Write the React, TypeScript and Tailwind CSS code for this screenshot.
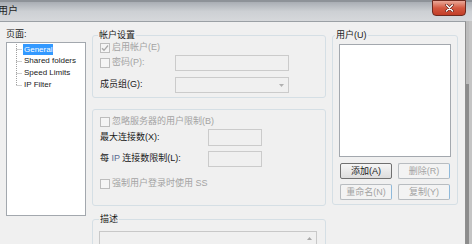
import React from "react";

const F = "font-['Liberation_Sans','Noto_Sans_CJK_SC',sans-serif]";

function Check({ checked }: { checked?: boolean }) {
  return (
    <span className="w-[10px] h-[10px] border border-[#bdbdbd] bg-[#f5f5f5] flex items-center justify-center shrink-0">
      {checked && (
        <svg width="8" height="8" viewBox="0 0 8 8">
          <path d="M1 4.2 L3 6.3 L7 1.5" stroke="#a9a9a9" strokeWidth="1.3" fill="none" />
        </svg>
      )}
    </span>
  );
}

function Box({ w, h }: { w: string; h: string }) {
  return <div className={`${w} ${h} border border-[#cbcbcb] bg-[#f0f0f0]`} />;
}

function Btn({ label, enabled }: { label: string; enabled?: boolean }) {
  return enabled ? (
    <div className="w-[52px] h-[16px] rounded-[2px] border border-[#707070] bg-gradient-to-b from-[#f6f6f6] to-[#dddddd] flex items-center justify-center text-[9px] text-[#1a1a1a] leading-none">
      {label}
    </div>
  ) : (
    <div className="w-[52px] h-[16px] rounded-[2px] border border-[#b8bcc0] border-r-[#8fb9da] bg-[#f3f3f3] flex items-center justify-center text-[9px] text-[#a3a3a3] leading-none">
      {label}
    </div>
  );
}

export default function App() {
  return (
    <div className={`w-[472px] h-[244px] overflow-hidden bg-[#f0f0f0] ${F} text-[#1a1a1a]`}>
      {/* title bar */}
      <div className="h-[21px] flex items-start justify-between bg-gradient-to-b from-[#a9aeb4] via-[#cdd0d4] to-[#d6d8db] border-t-[2px] border-[#8d9298]">
        <div className="ml-[-2px] mt-[2px] text-[10px] leading-[14px] text-[#1e1e1e]">用户</div>
        <div className="mr-[6px] mt-[-2px] w-[34px] h-[16px] rounded-b-[4px] border border-[#6e2a1f] bg-gradient-to-b from-[#e9a898] via-[#d35840] to-[#c23e28] flex items-center justify-center">
          <svg width="9" height="8" viewBox="0 0 9 8">
            <path d="M1.5 1 L7.5 7 M7.5 1 L1.5 7" stroke="#5a1a12" strokeWidth="2.6" strokeLinecap="round" />
            <path d="M1.5 1 L7.5 7 M7.5 1 L1.5 7" stroke="#ffffff" strokeWidth="1.5" strokeLinecap="round" />
          </svg>
        </div>
      </div>

      <div className="flex h-[223px]">
        {/* client */}
        <div className="w-[466px] h-full border-t border-r border-t-[#9ba0a5] border-r-[#8e8e8e] flex">
          {/* left column */}
          <div className="pl-[6px] pt-[6px] w-[86px] shrink-0">
            <div className="text-[9px] leading-[12px] h-[12px]">页面:</div>
            <div className="mt-[2px] w-[80px] h-[174px] border border-[#a3a8ae] bg-white flex">
              <svg width="16" height="48" viewBox="0 0 16 48" className="shrink-0">
                <path d="M9.5 1 V42.5" stroke="#a0a0a0" strokeDasharray="1 1" />
                <path d="M9.5 6.5 H15 M9.5 18.5 H15 M9.5 30.5 H15 M9.5 42.5 H15" stroke="#a0a0a0" strokeDasharray="1 1" />
              </svg>
              <div className="flex flex-col text-[8px] leading-[12px]">
                <div className="h-[12px] flex items-center">
                  <span className="bg-[#3399ff] text-white px-[1px] h-[11px] leading-[11px]">General</span>
                </div>
                <div className="h-[12px] pl-[1px]">Shared folders</div>
                <div className="h-[12px] pl-[1px]">Speed Limits</div>
                <div className="h-[12px] pl-[1px]">IP Filter</div>
              </div>
            </div>
          </div>

          {/* middle column */}
          <div className="ml-[6px] pt-[7px] w-[234px] shrink-0 flex flex-col">
            <fieldset className="h-[69px] shrink-0 border border-[#d5dfe5] rounded-[3px]">
              <legend className="ml-[5px] px-[1px] text-[9px] leading-[12px]">帐户设置</legend>
              <div className="mt-[1px] h-[12px] pl-[7px] flex items-center gap-[2px] text-[9px] text-[#a3a3a3]">
                <Check checked />
                <span>启用帐户(E)</span>
              </div>
              <div className="mt-[1px] h-[16px] pl-[7px] flex items-center">
                <div className="w-[75px] flex items-center gap-[2px] text-[9px] text-[#a3a3a3]">
                  <Check />
                  <span>密码(P):</span>
                </div>
                <Box w="w-[114px]" h="h-[16px]" />
              </div>
              <div className="mt-[6px] h-[16px] pl-[7px] flex items-center">
                <div className="w-[75px] text-[9px]">成员组(G):</div>
                <div className="w-[114px] h-[16px] border border-[#cbcbcb] bg-[#f0f0f0] flex items-center justify-end pr-[4px]">
                  <svg width="5" height="3" viewBox="0 0 5 3">
                    <path d="M0 0 H5 L2.5 3 Z" fill="#b0b0b0" />
                  </svg>
                </div>
              </div>
            </fieldset>

            <div className="mt-[11px] h-[97px] shrink-0 border border-[#d5dfe5] rounded-[3px]">
              <div className="mt-[6px] h-[12px] pl-[7px] flex items-center gap-[2px] text-[9px] text-[#a3a3a3]">
                <Check />
                <span>忽略服务器的用户限制(B)</span>
              </div>
              <div className="mt-[1px] h-[17px] pl-[7px] flex items-center">
                <div className="w-[108px] text-[9px]">最大连接数(X):</div>
                <Box w="w-[54px]" h="h-[17px]" />
              </div>
              <div className="mt-[5px] h-[16px] pl-[7px] flex items-center">
                <div className="w-[108px] text-[9px]">
                  每 <span className="text-[#5a6a90]">IP</span> 连接数限制(L):
                </div>
                <Box w="w-[54px]" h="h-[16px]" />
              </div>
              <div className="mt-[11px] h-[12px] pl-[7px] flex items-center gap-[2px] text-[9px] text-[#a3a3a3]">
                <Check />
                <span>强制用户登录时使用 SS</span>
              </div>
            </div>

            <fieldset className="mt-[7px] h-[80px] shrink-0 border border-[#d5dfe5] rounded-[3px]">
              <legend className="ml-[6px] px-[1px] text-[9px] leading-[12px]">描述</legend>
              <div className="mt-[6px] ml-[6px] w-[218px] h-[50px] border border-[#c8c8c8] bg-[#f0f0f0] flex justify-end">
                <div className="w-[14px] pt-[5px] flex justify-center">
                  <svg width="5" height="3" viewBox="0 0 5 3">
                    <path d="M0 3 H5 L2.5 0 Z" fill="#a8a8a8" />
                  </svg>
                </div>
              </div>
            </fieldset>
          </div>

          {/* right column */}
          <div className="ml-[6px] pt-[7px] w-[126px] shrink-0">
            <fieldset className="h-[176px] border border-[#d5dfe5] rounded-[3px]">
              <legend className="ml-[2px] px-[1px] text-[9px] leading-[12px]">用户(U)</legend>
              <div className="mt-[3px] ml-[6px] w-[112px] h-[113px] border border-[#a3a8ae] bg-white" />
              <div className="mt-[6px] ml-[7px] flex gap-[6px]">
                <Btn label="添加(A)" enabled />
                <Btn label="删除(R)" />
              </div>
              <div className="mt-[5px] ml-[7px] flex gap-[6px]">
                <Btn label="重命名(N)" />
                <Btn label="复制(Y)" />
              </div>
            </fieldset>
          </div>
        </div>

        {/* right frame strip */}
        <div className="w-[6px] h-full flex">
          <div className="w-[3px] h-full flex flex-col">
            <div className="h-[63px] bg-[#bcbcbc]" />
            <div className="flex-1 bg-[#8c8c8c]" />
          </div>
          <div className="w-[3px] h-full bg-[#c4c4c4]" />
        </div>
      </div>
    </div>
  );
}
